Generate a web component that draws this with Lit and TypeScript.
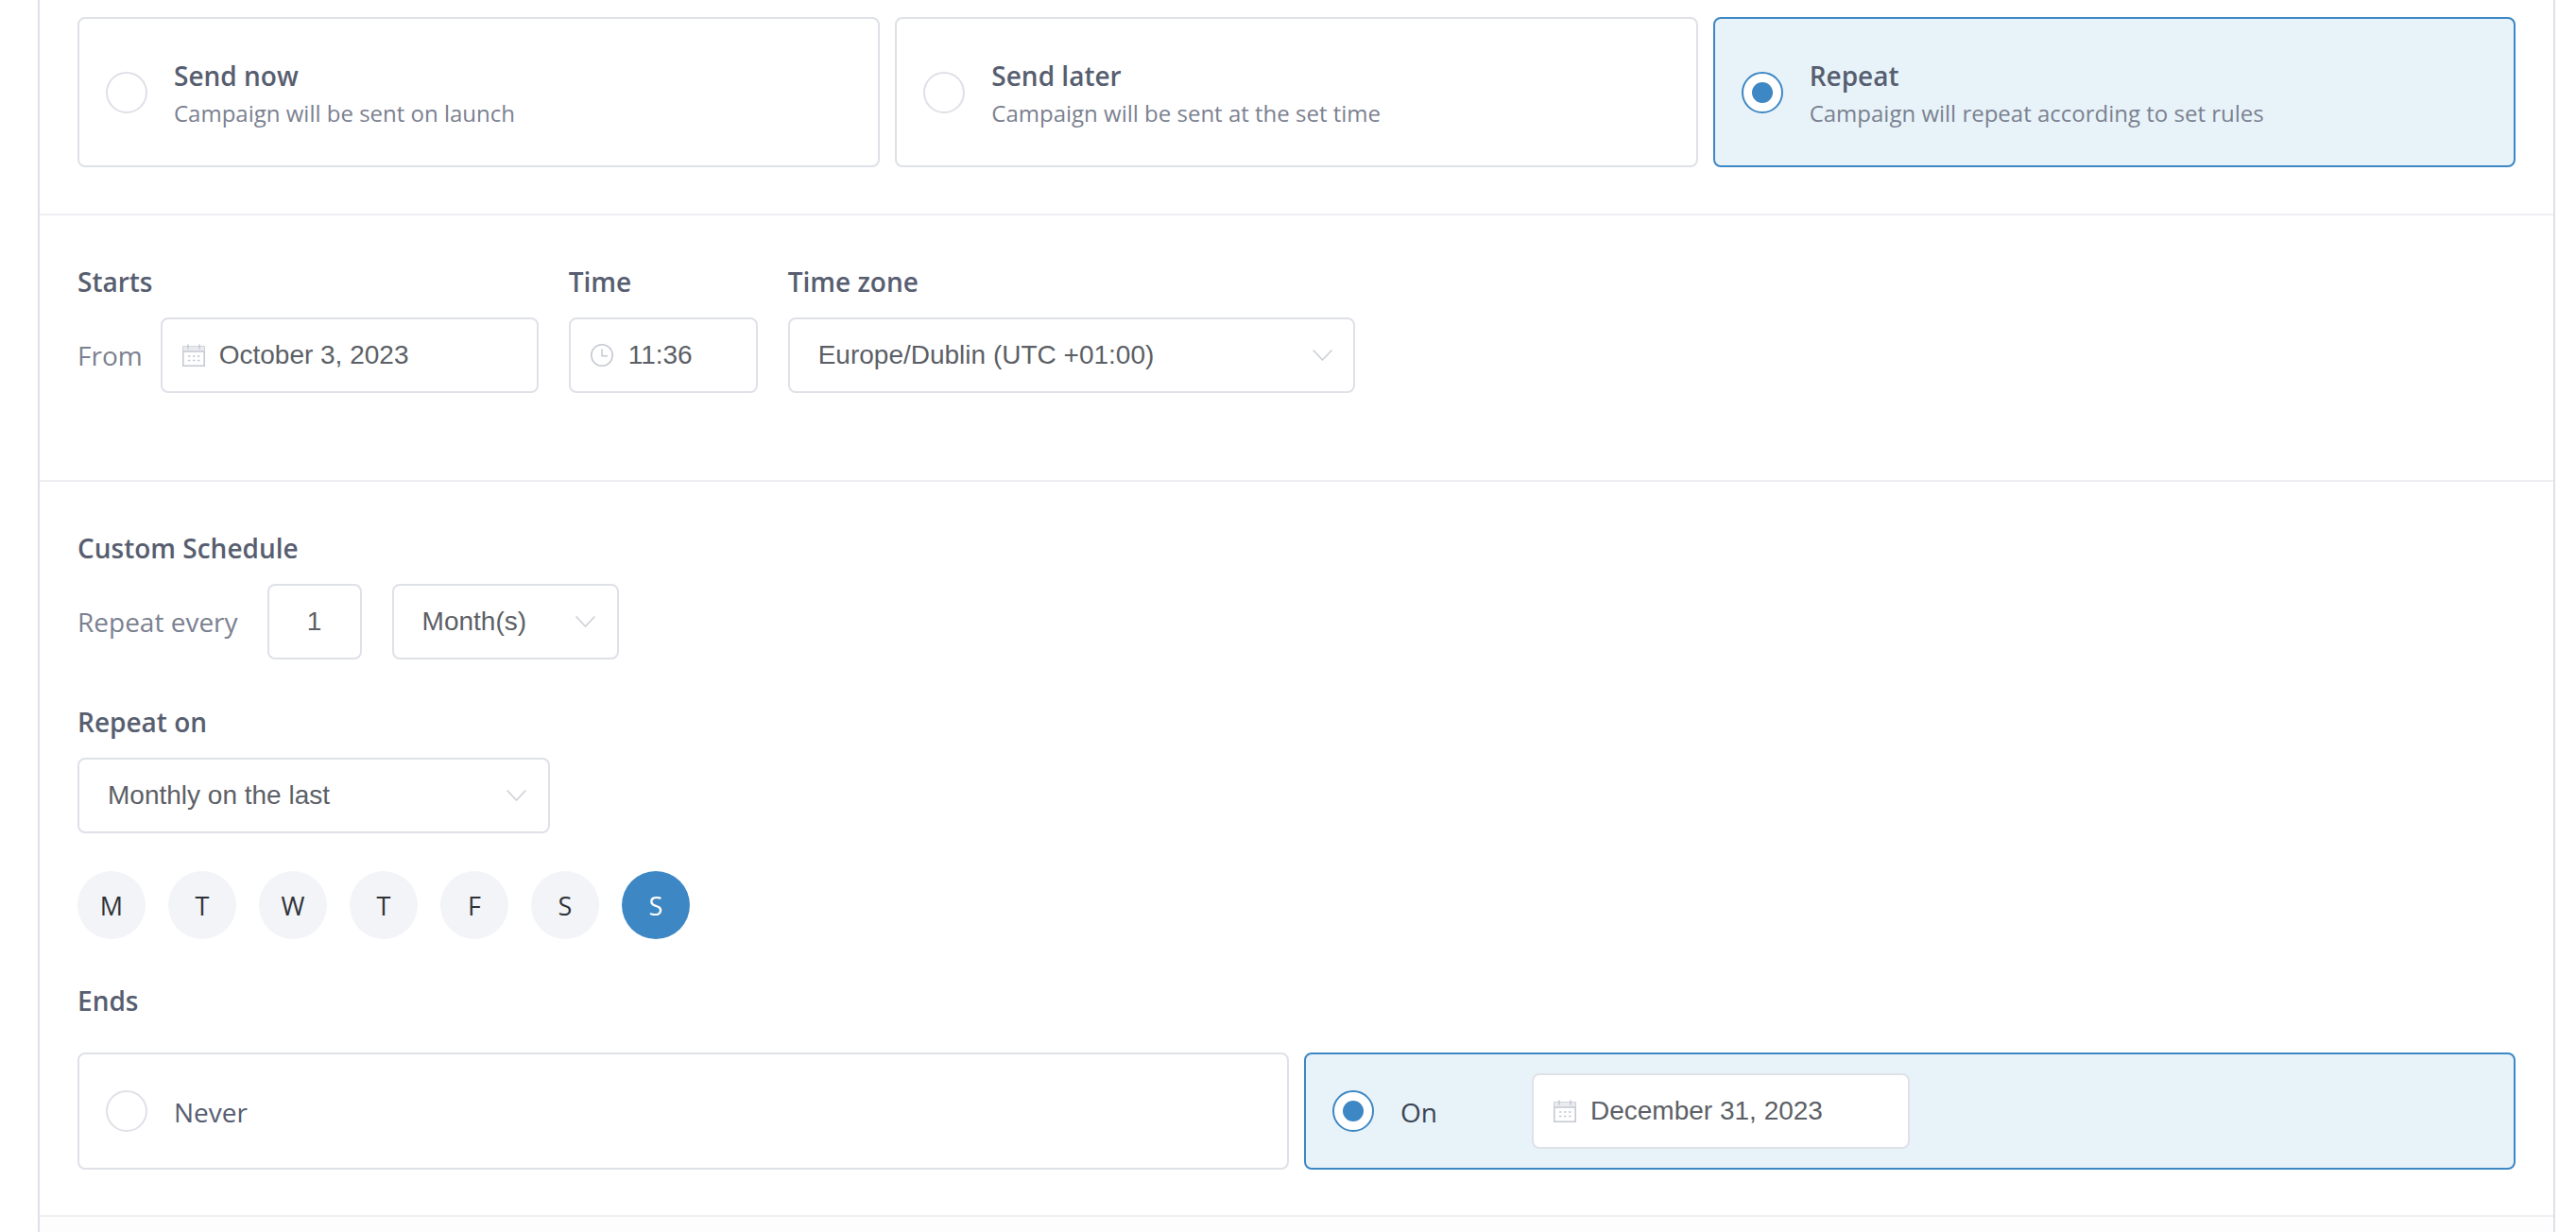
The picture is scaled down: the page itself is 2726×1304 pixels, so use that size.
import { LitElement, html, css } from "lit";
import { customElement } from "lit/decorators.js";

const cal = html`<svg class="ic" width="24" height="24" viewBox="0 0 24 24" fill="none" stroke="#c4c7d0" stroke-width="1.5"><rect x="0.8" y="3" width="22.4" height="20.2"/><rect x="0.8" y="3" width="22.4" height="5" fill="#e9ebef" stroke="none"/><path d="M6 0.5v5M18 0.5v5M0.8 8h22.4"/><path d="M6 13h2.4M11 13h2.4M16 13h2.4M6 17.5h2.4M11 17.5h2.4M16 17.5h2.4" stroke-width="1.6"/></svg>`;
const clock = html`<svg class="ic" width="24" height="24" viewBox="0 0 24 24" fill="none" stroke="#c4c7d0" stroke-width="1.5"><circle cx="12" cy="12" r="11.2"/><path d="M12 5.5v7.3h6"/></svg>`;
const chev = html`<svg class="chev" width="21" height="12" viewBox="0 0 21 12" fill="none" stroke="#c9ccd4" stroke-width="1.4"><path d="M0.6 0.6L10.5 11L20.4 0.6"/></svg>`;

@customElement("app-root")
export class AppRoot extends LitElement {
  static styles = css`
    :host { display: block; height: 1304px; background: #fff; overflow: hidden; font-family: "Open Sans", sans-serif; }
    .panel { margin: 0 22px 0 40px; border-left: 2px solid #dfe0e9; border-right: 2px solid #dfe0e9; height: 1304px; box-sizing: border-box; }
    .sec { padding: 0 40px; border-bottom: 2px solid #eeeef3; }
    .s1 { padding-top: 18px; padding-bottom: 49px; }
    .s2 { padding-top: 53px; padding-bottom: 92px; }
    .s3 { padding-top: 53px; padding-bottom: 48px; }
    .rest { height: 16px; background: #fdfdfd; }
    .cards { display: flex; gap: 16px; }
    .card { flex: 1 1 0; min-width: 0; box-sizing: border-box; height: 159px; border: 2px solid #dfe1e8; border-radius: 8px; display: flex; align-items: center; padding-left: 28px; gap: 28px; background: #fff; }
    .ends .card { height: 124px; }
    .card.on { background: #e8f3f9; border-color: #3d87c4; }
    .radio { flex: none; width: 44px; height: 44px; box-sizing: border-box; border: 2px solid #dfe0e8; border-radius: 50%; background: #fff; display: flex; align-items: center; justify-content: center; }
    .on .radio { border-color: #3d87c4; }
    .on .radio::after { content: ""; width: 22px; height: 22px; border-radius: 50%; background: #3d87c4; }
    .txt { padding-top: 5px; }
    .t { font-size: 28px; font-weight: 600; color: #575e70; height: 36px; line-height: 35px; }
    .d { font-size: 24px; color: #7b8190; line-height: 36px; margin-top: 3px; }
    .plain { font-size: 28px; color: #575e70; line-height: 36px; padding-top: 1px; }
    .on .plain { color: #3a4354; }
    .label { font-size: 28px; font-weight: 600; color: #575e70; height: 36px; line-height: 35px; }
    .row { display: flex; align-items: center; }
    .fields { display: flex; gap: 32px; }
    .gapped { margin-top: 19px; }
    .muted { font-size: 28px; color: #7b8190; line-height: 36px; }
    .from { margin-right: 19px; }
    .every { margin-right: 31px; }
    .box { box-sizing: border-box; height: 80px; border: 2px solid #dfe1e8; border-radius: 8px; background: #fff; display: flex; align-items: center; font-family: "Liberation Sans", Arial, sans-serif; font-size: 28px; color: #5c5f66; }
    .date { width: 400px; padding-left: 21px; gap: 15px; }
    .time { width: 200px; padding-left: 21px; gap: 16px; }
    .zone { width: 600px; padding: 0 22px 0 30px; justify-content: space-between; }
    .num { width: 100px; justify-content: center; }
    .unit { width: 240px; margin-left: 32px; padding: 0 23px 0 30px; justify-content: space-between; }
    .mon { width: 500px; padding: 0 23px 0 30px; justify-content: space-between; }
    .ic, .chev { flex: none; }
    .repeat-on { margin-top: 49px; }
    .mt19 { margin-top: 19px; }
    .days { display: flex; gap: 24px; margin-top: 40px; }
    .day { width: 72px; height: 72px; border-radius: 50%; background: #f3f4f8; color: #2f3338; font-size: 27px; display: flex; align-items: center; justify-content: center; }
    .day.sel { background: #3d87c4; color: #fff; }
    .ends-l { margin-top: 48px; }
    .mt36 { margin-top: 36px; }
    .onlab { width: 83px; margin-right: 28px; }
    .on-card { gap: 28px; }
  `;

  render() {
    const opts = [
      ["Send now", "Campaign will be sent on launch", false],
      ["Send later", "Campaign will be sent at the set time", false],
      ["Repeat", "Campaign will repeat according to set rules", true],
    ] as const;
    const days = ["M", "T", "W", "T", "F", "S", "S"];
    return html`
      <div class="panel">
        <section class="sec s1">
          <div class="cards">
            ${opts.map(([t, d, on]) => html`
              <div class="card ${on ? "on" : ""}">
                <div class="radio"></div>
                <div class="txt"><div class="t">${t}</div><div class="d">${d}</div></div>
              </div>`)}
          </div>
        </section>
        <section class="sec s2">
          <div class="fields">
            <div>
              <div class="label">Starts</div>
              <div class="row gapped">
                <div class="muted from">From</div>
                <div class="box date">${cal}<span>October 3, 2023</span></div>
              </div>
            </div>
            <div>
              <div class="label">Time</div>
              <div class="box time gapped">${clock}<span>11:36</span></div>
            </div>
            <div>
              <div class="label">Time zone</div>
              <div class="box zone gapped"><span>Europe/Dublin (UTC +01:00)</span>${chev}</div>
            </div>
          </div>
        </section>
        <section class="sec s3">
          <div class="label">Custom Schedule</div>
          <div class="row mt19">
            <div class="muted every">Repeat every</div>
            <div class="box num"><span>1</span></div>
            <div class="box unit"><span>Month(s)</span>${chev}</div>
          </div>
          <div class="label repeat-on">Repeat on</div>
          <div class="box mon mt19"><span>Monthly on the last</span>${chev}</div>
          <div class="days">
            ${days.map((d, i) => html`<div class="day ${i === 6 ? "sel" : ""}">${d}</div>`)}
          </div>
          <div class="label ends-l">Ends</div>
          <div class="cards ends mt36">
            <div class="card"><div class="radio"></div><div class="plain">Never</div></div>
            <div class="card on on-card">
              <div class="radio"></div>
              <div class="plain onlab">On</div>
              <div class="box date">${cal}<span>December 31, 2023</span></div>
            </div>
          </div>
        </section>
        <div class="rest"></div>
      </div>
    `;
  }
}
